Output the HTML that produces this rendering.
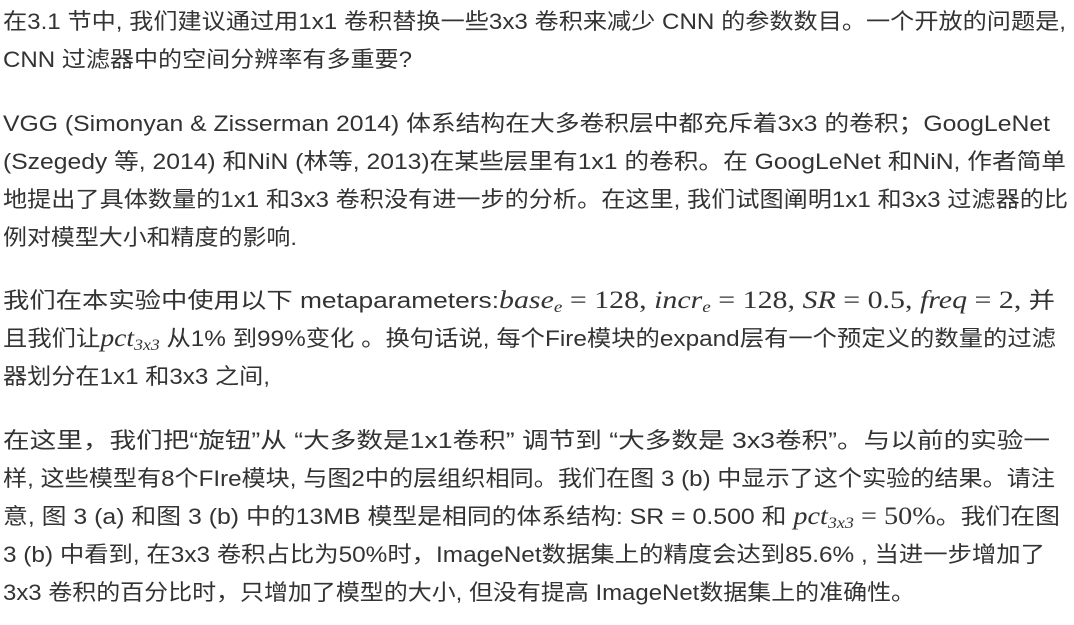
<!DOCTYPE html>
<html><head><meta charset="utf-8"><style>
body{margin:0;width:1074px;height:625px;background:#fff;overflow:hidden;position:relative}
.l{position:absolute;left:3px;height:38px;line-height:38px;white-space:nowrap;font-family:"Liberation Sans","Noto Sans CJK SC",sans-serif;font-size:22px;color:#333;transform-origin:0 50%;display:inline-block}
.m{font-family:"Liberation Serif",serif;font-size:25px}
.i{font-style:italic}
sub{font-size:16px;vertical-align:-4px;line-height:0}
</style></head><body>
<div class="l" data-w="1063" style="top:3px">在3.1 节中, 我们建议通过用1x1 卷积替换一些3x3 卷积来减少 CNN 的参数数目。一个开放的问题是,</div>
<div class="l" data-w="409" style="top:41px">CNN 过滤器中的空间分辨率有多重要?</div>
<div class="l" data-w="1047" style="top:105px">VGG (Simonyan &amp; Zisserman 2014) 体系结构在大多卷积层中都充斥着3x3 的卷积；GoogLeNet</div>
<div class="l" data-w="1063" style="top:143px">(Szegedy 等, 2014) 和NiN (林等, 2013)在某些层里有1x1 的卷积。在 GoogLeNet 和NiN, 作者简单</div>
<div class="l" data-w="1065" style="top:181px">地提出了具体数量的1x1 和3x3 卷积没有进一步的分析。在这里, 我们试图阐明1x1 和3x3 过滤器的比</div>
<div class="l" data-w="294" style="top:219px">例对模型大小和精度的影响.</div>
<div class="l" data-w="1052" style="top:282px">我们在本实验中使用以下 metaparameters:<span class="m"><span class="i">base<sub>e</sub></span> = 128, <span class="i">incr<sub>e</sub></span> = 128, <span class="i">SR</span> = 0.5, <span class="i">freq</span> = 2,</span> 并</div>
<div class="l" data-w="1053" style="top:320px">且我们让<span class="m i">pct<sub>3x3</sub></span> 从1% 到99%变化 。换句话说, 每个Fire模块的expand层有一个预定义的数量的过滤</div>
<div class="l" data-w="267" style="top:358px">器划分在1x1 和3x3 之间,</div>
<div class="l" data-w="1047" style="top:422px">在这里，我们把“旋钮”从 “大多数是1x1卷积” 调节到 “大多数是 3x3卷积”。与以前的实验一</div>
<div class="l" data-w="1052" style="top:460px">样, 这些模型有8个FIre模块, 与图2中的层组织相同。我们在图 3 (b) 中显示了这个实验的结果。请注</div>
<div class="l" data-w="1057" style="top:498px">意, 图 3 (a) 和图 3 (b) 中的13MB 模型是相同的体系结构: SR = 0.500 和 <span class="m"><span class="i">pct<sub>3x3</sub></span> = 50%</span>。我们在图</div>
<div class="l" data-w="1042" style="top:536px">3 (b) 中看到, 在3x3 卷积占比为50%时，ImageNet数据集上的精度会达到85.6% , 当进一步增加了</div>
<div class="l" data-w="912" style="top:574px">3x3 卷积的百分比时，只增加了模型的大小, 但没有提高 ImageNet数据集上的准确性。</div>
<script>
document.querySelectorAll('.l').forEach(function(e){var w=e.getBoundingClientRect().width;var t=+e.getAttribute('data-w');if(w>0)e.style.transform='scaleX('+(t/w)+')';});
</script>
</body></html>
